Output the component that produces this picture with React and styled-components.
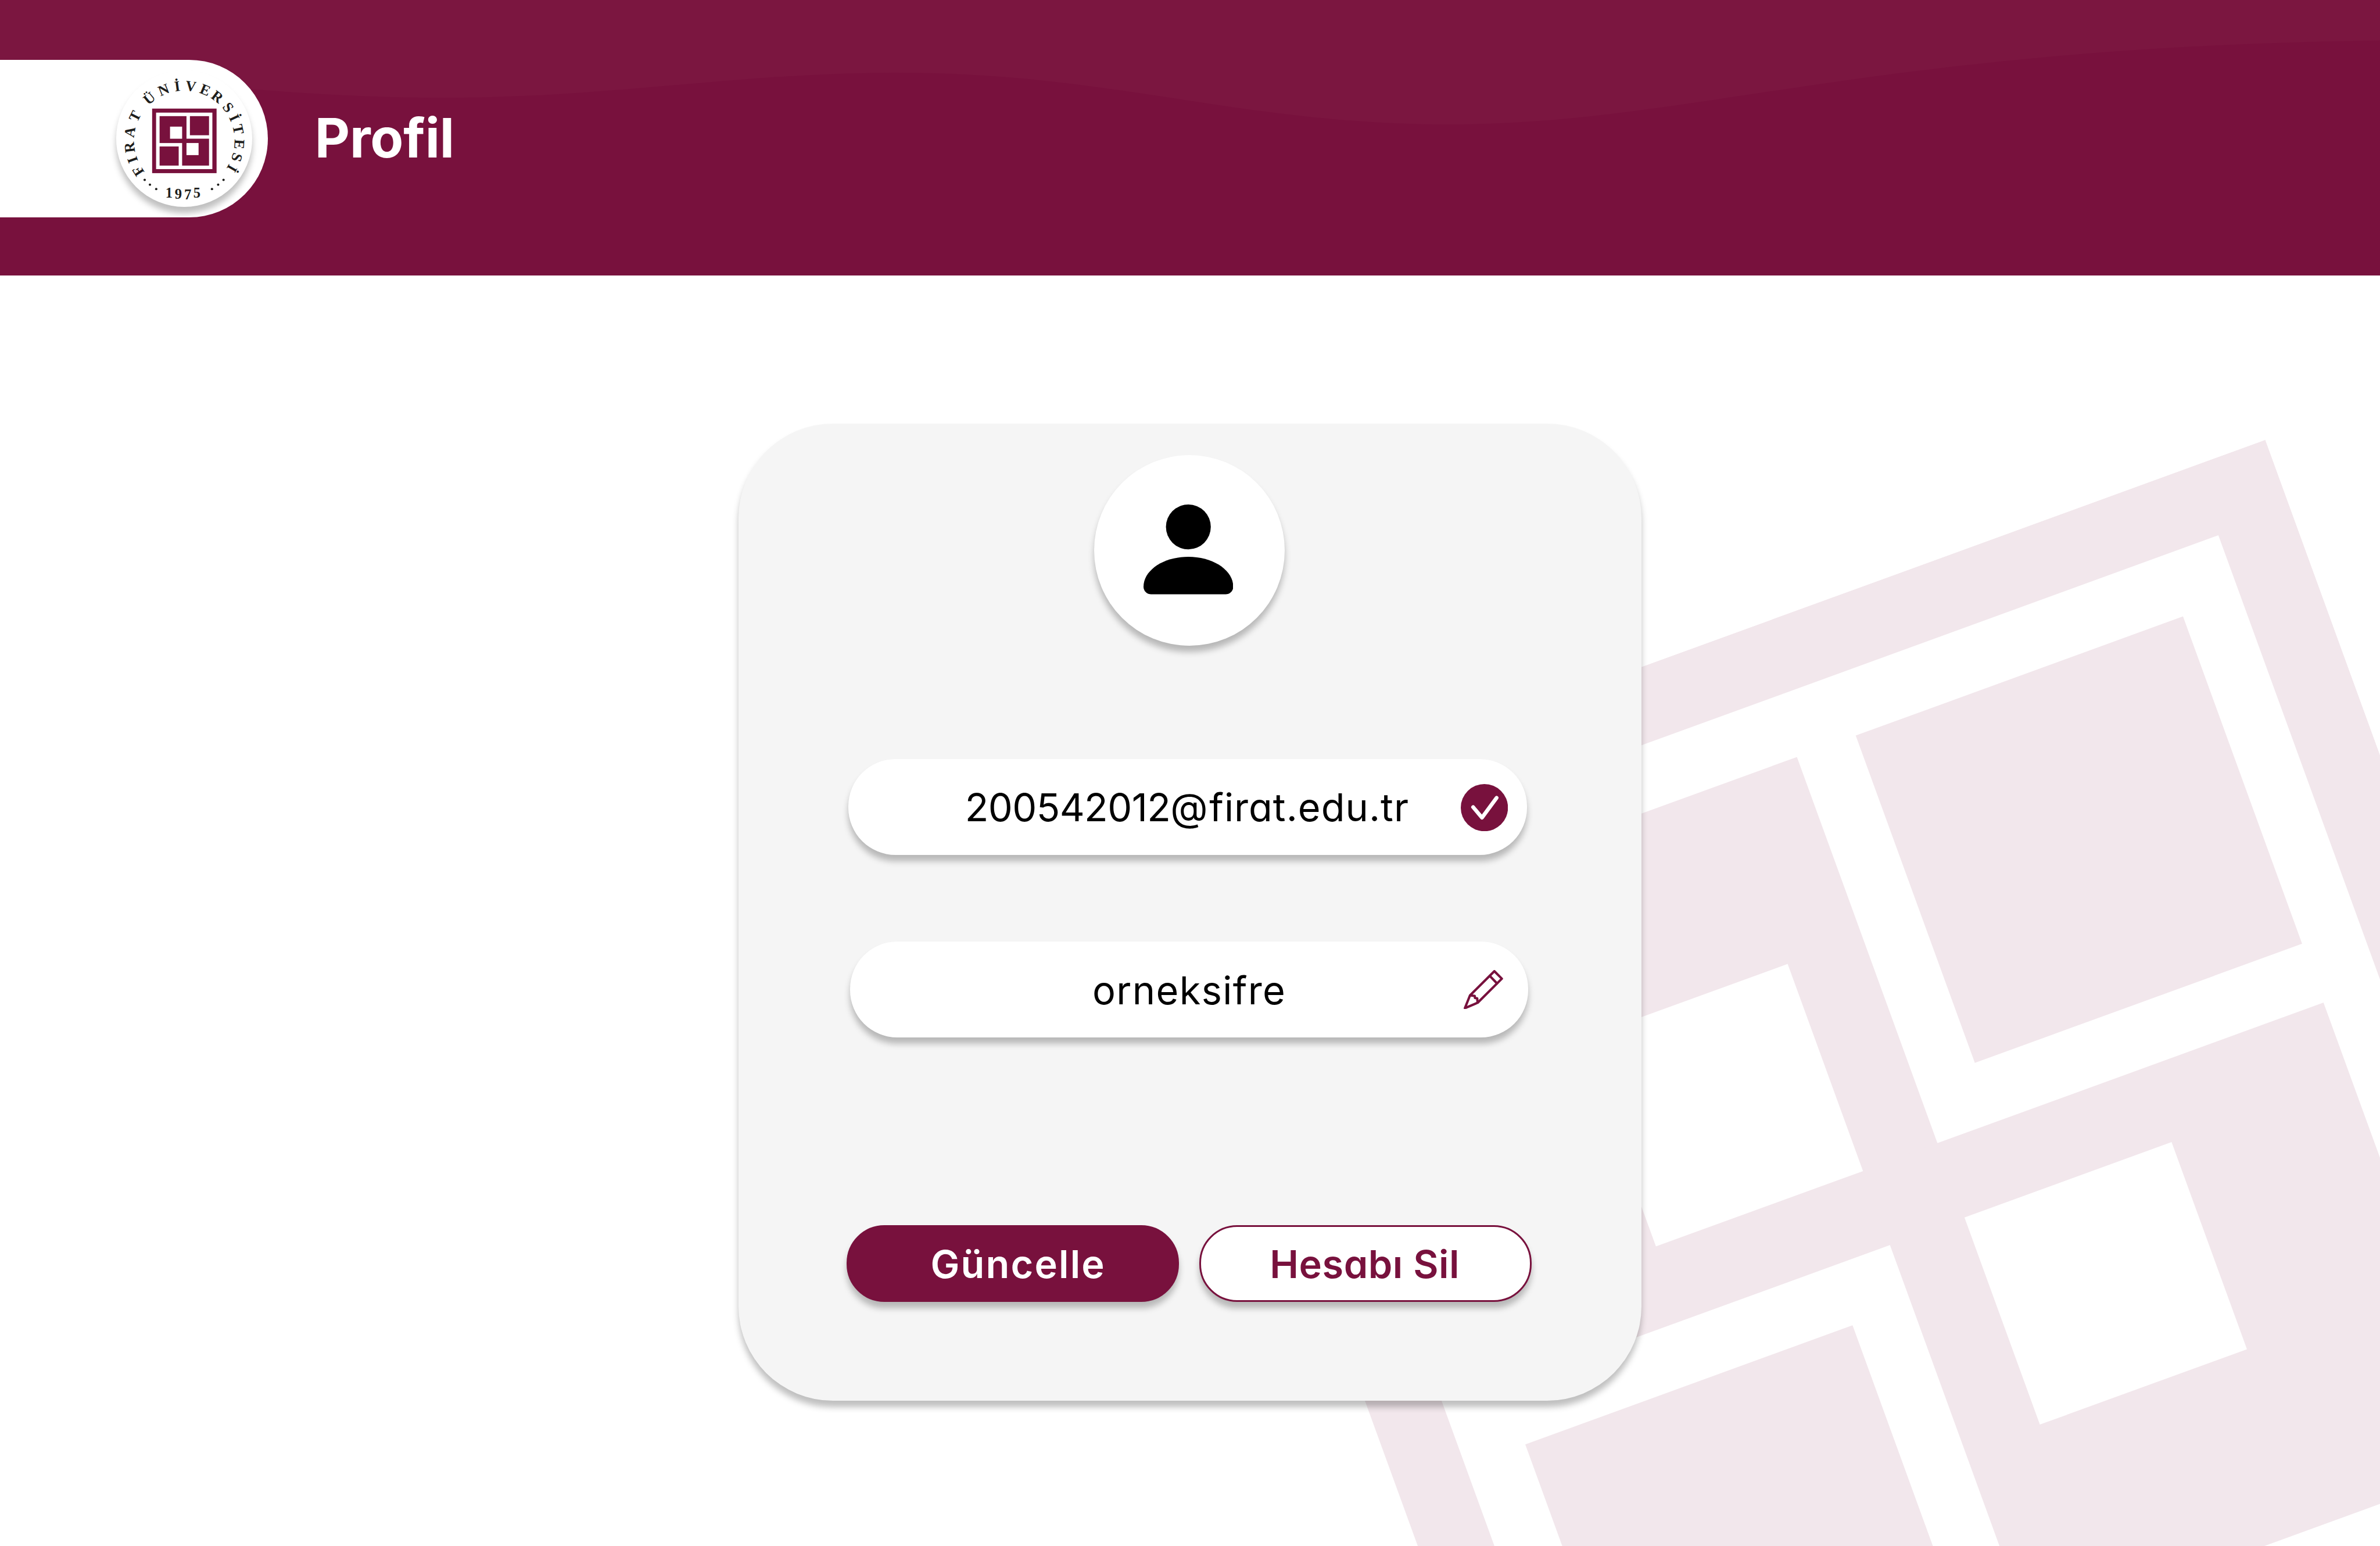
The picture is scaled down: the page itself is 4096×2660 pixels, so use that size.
import React from 'react';
import styled, { createGlobalStyle, css } from 'styled-components';

const SCALE = 4096 / 1512;
const u = (n) => `${+(n * SCALE).toFixed(3)}px`;

const color = {
  brand: '#78113d',
  wave: '#7b1640',
  card: '#f5f5f5',
  ink: '#1d1d1b',
};

const shadow = css`
  box-shadow: 0 ${u(4)} ${u(4)} rgba(0, 0, 0, 0.25);
`;

const GlobalStyle = createGlobalStyle`
  *, *::before, *::after { box-sizing: border-box; }
  body {
    margin: 0;
    background: #fff;
    font-family: Inter, "Liberation Sans", sans-serif;
    font-feature-settings: "cv11" 1;
  }
`;

const Page = styled.div`
  display: flex;
  flex-direction: column;
  width: ${u(1512)};
  height: 2660px;
  overflow: hidden;
  background: #fff;
`;

const Header = styled.header`
  position: relative;
  display: flex;
  align-items: flex-start;
  height: ${u(175)};
  padding-top: ${u(38)};
  background: ${color.brand};
`;

const Wave = styled.svg`
  position: absolute;
  left: 0;
  top: 0;
  width: 100%;
  height: 100%;
`;

const LogoTab = styled.div`
  position: relative;
  display: flex;
  align-items: center;
  justify-content: flex-end;
  width: ${u(170)};
  height: ${u(100)};
  padding-right: ${u(9.7)};
  border-radius: 0 ${u(50)} ${u(50)} 0;
  background: #fff;
`;

const Seal = styled.div`
  width: ${u(86.6)};
  height: ${u(86.6)};
  border-radius: 50%;
  background: #fff;
  ${shadow}

  svg {
    display: block;
    width: 100%;
    height: 100%;
    overflow: visible;
  }
`;

const Title = styled.h1`
  position: relative;
  margin: 0 0 0 ${u(30)};
  font-size: ${u(34.4)};
  font-weight: 700;
  line-height: ${u(99)};
  letter-spacing: ${u(-0.1)};
  color: #fff;
`;

const Main = styled.main`
  position: relative;
  display: flex;
  flex: 1;
  justify-content: center;
  align-items: flex-start;
  padding-top: ${u(94)};
`;

const Watermark = styled.svg`
  position: absolute;
  left: ${u(841.85)};
  top: ${u(209.7)};
  width: ${u(747.5)};
  height: ${u(747.5)};
  transform: rotate(-20deg);
`;

const Card = styled.section`
  position: relative;
  display: flex;
  flex-direction: column;
  align-items: center;
  width: ${u(574)};
  height: ${u(620.5)};
  padding: ${u(20)} ${u(1)} 0 0;
  border-radius: ${u(60)};
  background: ${color.card};
  ${shadow}
`;

const Avatar = styled.div`
  display: flex;
  align-items: center;
  justify-content: center;
  width: ${u(121)};
  height: ${u(121)};
  padding: 0 ${u(1)} ${u(1)} 0;
  border-radius: 50%;
  background: #fff;
  ${shadow}

  svg {
    width: ${u(57)};
    height: ${u(57)};
  }
`;

const Fields = styled.div`
  display: flex;
  flex-direction: column;
  align-items: flex-end;
  gap: ${u(55)};
  margin: ${u(72)} ${u(1)} 0 0;
`;

const Field = styled.div`
  display: grid;
  grid-template-columns: 1fr auto 1fr;
  align-items: center;
  width: ${u(431)};
  height: ${u(61)};
  margin-right: ${(p) => u(p.$inset || 0)};
  border-radius: ${u(30)};
  background: #fff;
  ${shadow}
`;

const Value = styled.span`
  grid-column: 2;
  padding: ${u(1)} ${(p) => u(p.$trail || 0)} 0 0;
  font-size: ${u(24.6)};
  line-height: ${u(60)};
  letter-spacing: ${(p) => u(p.$track || 0)};
  color: #000;
  white-space: nowrap;
`;

const Run = styled.span`
  letter-spacing: ${(p) => u(p.$track)};
`;

const FieldIcon = styled.svg`
  grid-column: 3;
  justify-self: end;
  width: ${(p) => u(p.$size)};
  height: ${(p) => u(p.$size)};
  margin-right: ${(p) => u(p.$edge)};
  margin-top: ${(p) => u(p.$drop || 0)};
`;

const Actions = styled.div`
  display: flex;
  gap: ${u(13)};
  margin-top: ${u(119)};
`;

const Button = styled.button`
  width: ${u(211)};
  height: ${u(49)};
  padding: ${u(1)} 0 0;
  border: 3px solid ${color.brand};
  border-radius: ${u(24)};
  background: ${(p) => (p.$outline ? '#fff' : color.brand)};
  color: ${(p) => (p.$outline ? color.brand : '#fff')};
  font: 600 ${u(24.6)} / ${u(46)} Inter, "Liberation Sans", sans-serif;
  font-feature-settings: "cv11" 1;
  letter-spacing: ${(p) => u(p.$track)};
  text-align: center;
  text-indent: ${(p) => u(p.$nudge)};
  ${shadow}
`;

const Emblem = ({ paper = '#fff', ink = color.brand }) => (
  <>
    <rect x="0.5" width="298.5" height="299" fill={ink} />
    <rect x="18.8" y="18.7" width="260.7" height="261.6" fill={paper} />
    <rect x="35" y="35" width="124.6" height="124.6" fill={ink} />
    <rect x="139.4" y="139.4" width="124.6" height="124.6" fill={ink} />
    <rect x="175.5" y="35" width="88.5" height="88.5" fill={ink} />
    <rect x="35" y="175.5" width="88.5" height="88.5" fill={ink} />
    <rect x="83.4" y="83.6" width="56" height="56" fill={paper} />
    <rect x="159.6" y="159.5" width="56" height="56" fill={paper} />
  </>
);

/* Letter, angle from the top of the ring in degrees, glyph advance in em. */
const RING = [
  ['F', -123.1, 0.611], ['I', -110.1, 0.389], ['R', -96.9, 0.722], ['A', -80.8, 0.722], ['T', -63.4, 0.667],
  [' ', -50, 0.25],
  ['Ü', -39.5, 0.722], ['N', -22.1, 0.722], ['İ', -7.4, 0.389], ['V', 6.9, 0.722], ['E', 22.3, 0.667],
  ['R', 36.9, 0.722], ['S', 52.7, 0.556], ['İ', 65.3, 0.389], ['T', 77.9, 0.667], ['E', 93.5, 0.667],
  ['S', 107.4, 0.556], ['İ', 120, 0.389],
];
const RING_SIZE = 112;
const ringPoints = RING.map(([, deg, adv]) => {
  const a = (deg * Math.PI) / 180;
  const half = (adv * RING_SIZE) / 2;
  return [564 + 383 * Math.sin(a) - half * Math.cos(a), 594 - 383 * Math.cos(a) - half * Math.sin(a)];
});

const RingText = styled.text`
  white-space: pre;
`;

const SealArt = () => (
  <svg viewBox="45 56.5 1039 1039">
    <g transform="translate(318 348) scale(1.6455)">
      <Emblem />
    </g>
    <g fill={color.ink} fontFamily='"Liberation Serif", serif' fontWeight="700">
      <RingText
        fontSize={RING_SIZE}
        x={ringPoints.map((p) => p[0].toFixed(1)).join(' ')}
        y={ringPoints.map((p) => p[1].toFixed(1)).join(' ')}
        rotate={RING.map((r) => r[1]).join(' ')}
      >
        {RING.map((r) => r[0]).join('')}
      </RingText>
      <text fontSize="109" x="420 491 563 633" y="1026 1037 1039 1027">1975</text>
      {[[262, 891], [302, 928], [350, 961], [775, 961], [822, 928], [863, 891]].map(([x, y]) => (
        <circle key={x} cx={x} cy={y} r="9" />
      ))}
    </g>
  </svg>
);

const PersonIcon = () => (
  <svg viewBox="0 0 57 57">
    <circle cx="28.5" cy="14.25" r="14.25" />
    <path d="M57 52.25C57 54.9 54.9 57 52.25 57H4.75C2.1 57 0 54.9 0 52.25C0 41.75 12.77 33.25 28.5 33.25S57 41.75 57 52.25Z" />
  </svg>
);

const CheckIcon = () => (
  <FieldIcon viewBox="0 0 360 360" $size={30} $edge={12} $drop={1}>
    <circle cx="180" cy="180" r="180" fill={color.brand} />
    <path d="M94 176L162 256L273 105" fill="none" stroke="#fff" strokeWidth="29" strokeLinecap="round" strokeLinejoin="round" />
  </FieldIcon>
);

const PencilIcon = () => (
  <FieldIcon viewBox="0 0 300 300" $size={25} $edge={16}>
    <g fill="none" stroke={color.brand} strokeWidth="18" strokeLinecap="round" strokeLinejoin="round">
      <path d="M9 291L48 194L234 9L291 66L107 249Z" />
      <path d="M199 45L254 102" />
      <path d="M52 194L84 197L86 213L103 216L106 246" />
    </g>
  </FieldIcon>
);

export default function App() {
  return (
    <Page>
      <GlobalStyle />
      <Header>
        <Wave viewBox="0 0 6048 700" preserveAspectRatio="none">
          <path
            fill={color.wave}
            d="M0 0V160C370 200 740 248.4 1118 248.4C1560 248.4 1870 185 2283 185C2830 185 3150 316 3683 316C4300 316 4750 120 6048 103V0Z"
          />
        </Wave>
        <LogoTab>
          <Seal>
            <SealArt />
          </Seal>
        </LogoTab>
        <Title>Profil</Title>
      </Header>
      <Main>
        <Watermark viewBox="0 0 299 299">
          <Emblem ink="#f2e7ec" />
        </Watermark>
        <Card>
          <Avatar>
            <PersonIcon />
          </Avatar>
          <Fields>
            <Field $inset={1}>
              <Value $trail={0.8}>
                <Run $track={-0.21}>200542012</Run>
                <Run $track={1}>@</Run>
                <Run $track={0.37}>firat.edu.tr</Run>
              </Value>
              <CheckIcon />
            </Field>
            <Field>
              <Value $track={0.5}>orneksifre</Value>
              <PencilIcon />
            </Field>
          </Fields>
          <Actions>
            <Button type="button" $track={0.8} $nudge={6.6}>Güncelle</Button>
            <Button type="button" $outline $track={0.2} $nudge={-1}>Hesabı Sil</Button>
          </Actions>
        </Card>
      </Main>
    </Page>
  );
}
